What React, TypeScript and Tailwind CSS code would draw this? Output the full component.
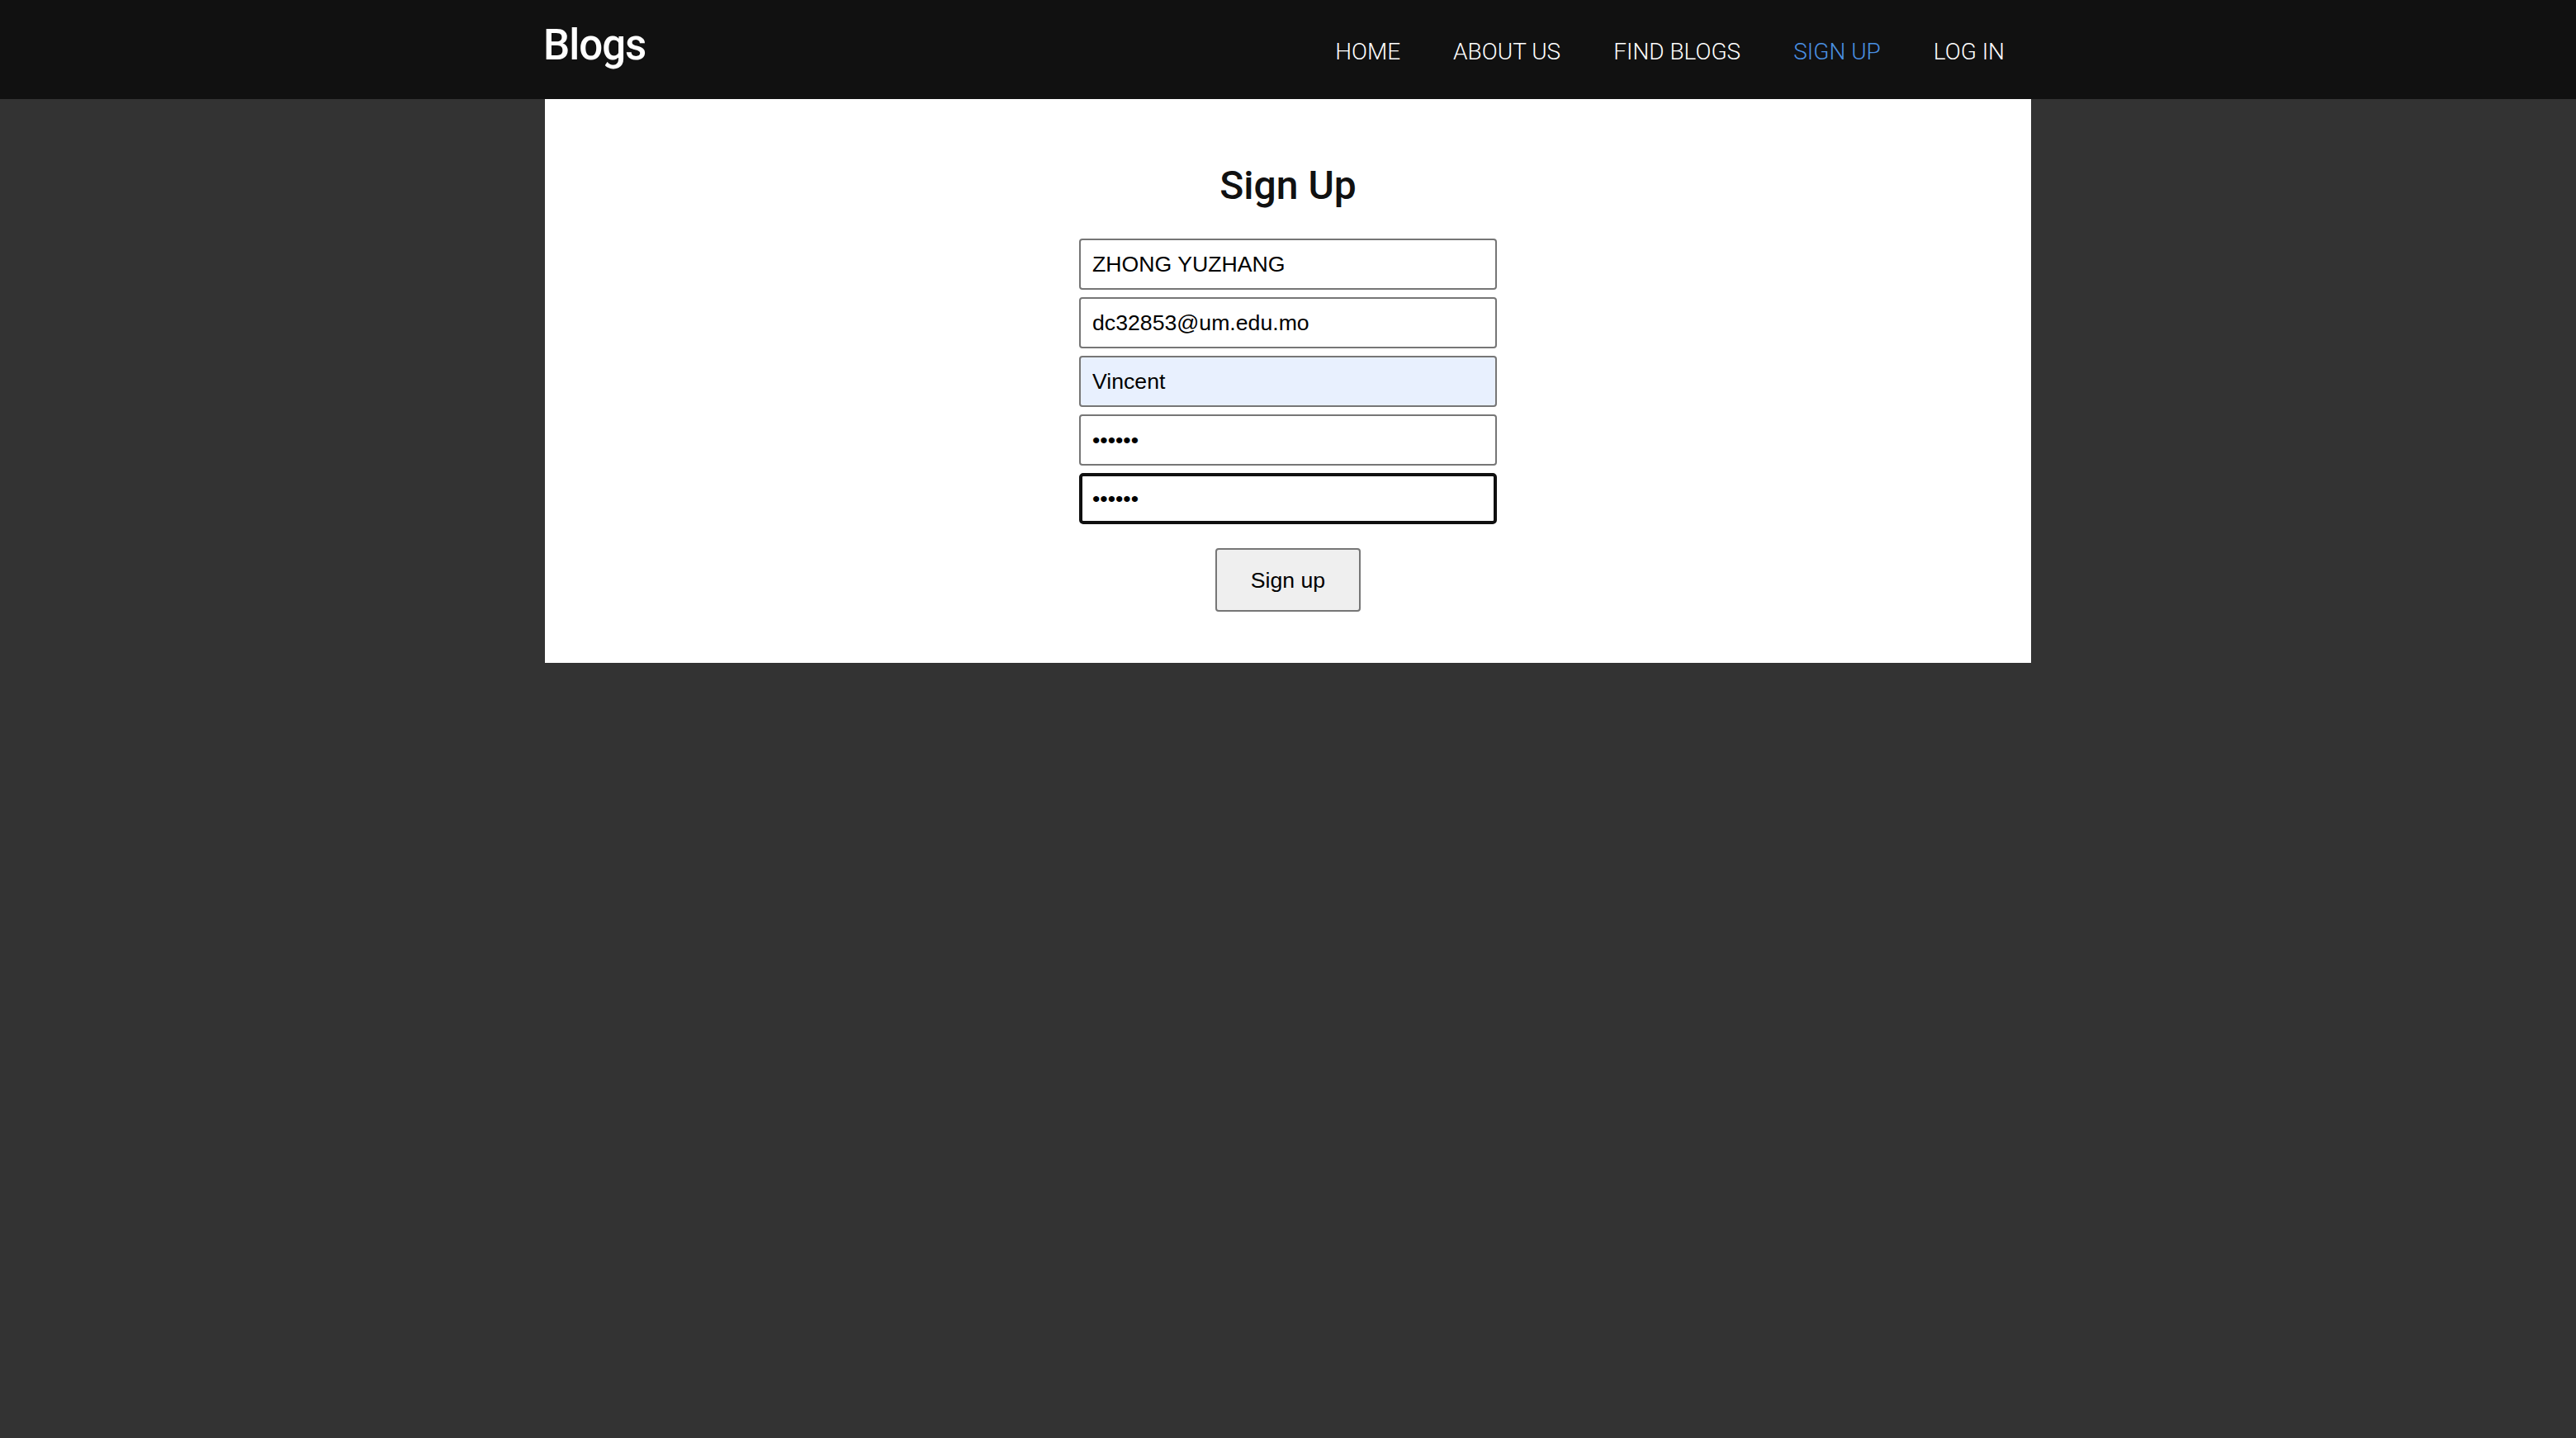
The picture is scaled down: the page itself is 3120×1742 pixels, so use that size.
import { useState } from "react";

const navLinks = [
  { label: "HOME", active: false },
  { label: "ABOUT US", active: false },
  { label: "FIND BLOGS", active: false },
  { label: "SIGN UP", active: true },
  { label: "LOG IN", active: false },
];

export default function App() {
  const [name, setName] = useState("ZHONG YUZHANG");
  const [email, setEmail] = useState("dc32853@um.edu.mo");
  const [username, setUsername] = useState("Vincent");
  const [password, setPassword] = useState("123456");
  const [confirm, setConfirm] = useState("123456");

  const inputClass =
    "w-[506px] h-[62px] border-2 border-[#767676] rounded-[4px] pl-[14px] text-[26.67px] text-black outline-none font-['Liberation_Sans',Arial,sans-serif]";

  return (
    <div className="min-h-screen bg-[#333333] font-['Roboto',sans-serif]">
      {/* Top nav */}
      <header className="h-[120px] bg-[#111111]">
        <div className="w-[1800px] mx-auto flex items-baseline justify-between pt-[17px]">
          <a className="-ml-[2px] text-[51px] font-medium text-white leading-normal tracking-[-1px]">Blogs</a>
          <nav className="flex items-baseline">
            {navLinks.map((link) => (
              <a
                key={link.label}
                className={`px-[32px] text-[28px] font-light leading-normal ${
                  link.active ? "text-[#4a90e2]" : "text-white"
                }`}
              >
                {link.label}
              </a>
            ))}
          </nav>
        </div>
      </header>

      {/* Sign up card */}
      <main className="w-[1800px] mx-auto bg-white flex flex-col items-center pt-[69px] pb-[62px]">
        <h2 className="text-[48px] font-medium leading-normal text-[#111111]">Sign Up</h2>
        <form className="mt-[28px] flex flex-col gap-[9px]" onSubmit={(e) => e.preventDefault()}>
          <input className={inputClass} value={name} onChange={(e) => setName(e.target.value)} />
          <input className={inputClass} value={email} onChange={(e) => setEmail(e.target.value)} />
          <input
            className={`${inputClass} bg-[#e8f0fe]`}
            value={username}
            onChange={(e) => setUsername(e.target.value)}
          />
          <input
            type="password"
            className={inputClass}
            value={password}
            onChange={(e) => setPassword(e.target.value)}
          />
          <input
            type="password"
            className="w-[506px] h-[62px] border-[4px] border-[#101010] rounded-[5px] pl-[12px] text-[26.67px] text-black outline-none font-['Liberation_Sans',Arial,sans-serif]"
            value={confirm}
            onChange={(e) => setConfirm(e.target.value)}
          />
          <div className="flex justify-center mt-[20px]">
            <button
              type="submit"
              className="w-[176px] h-[77px] bg-[#efefef] border-2 border-[#767676] rounded-[4px] text-[26.67px] text-black font-['Liberation_Sans',Arial,sans-serif]"
            >
              Sign up
            </button>
          </div>
        </form>
      </main>
    </div>
  );
}
